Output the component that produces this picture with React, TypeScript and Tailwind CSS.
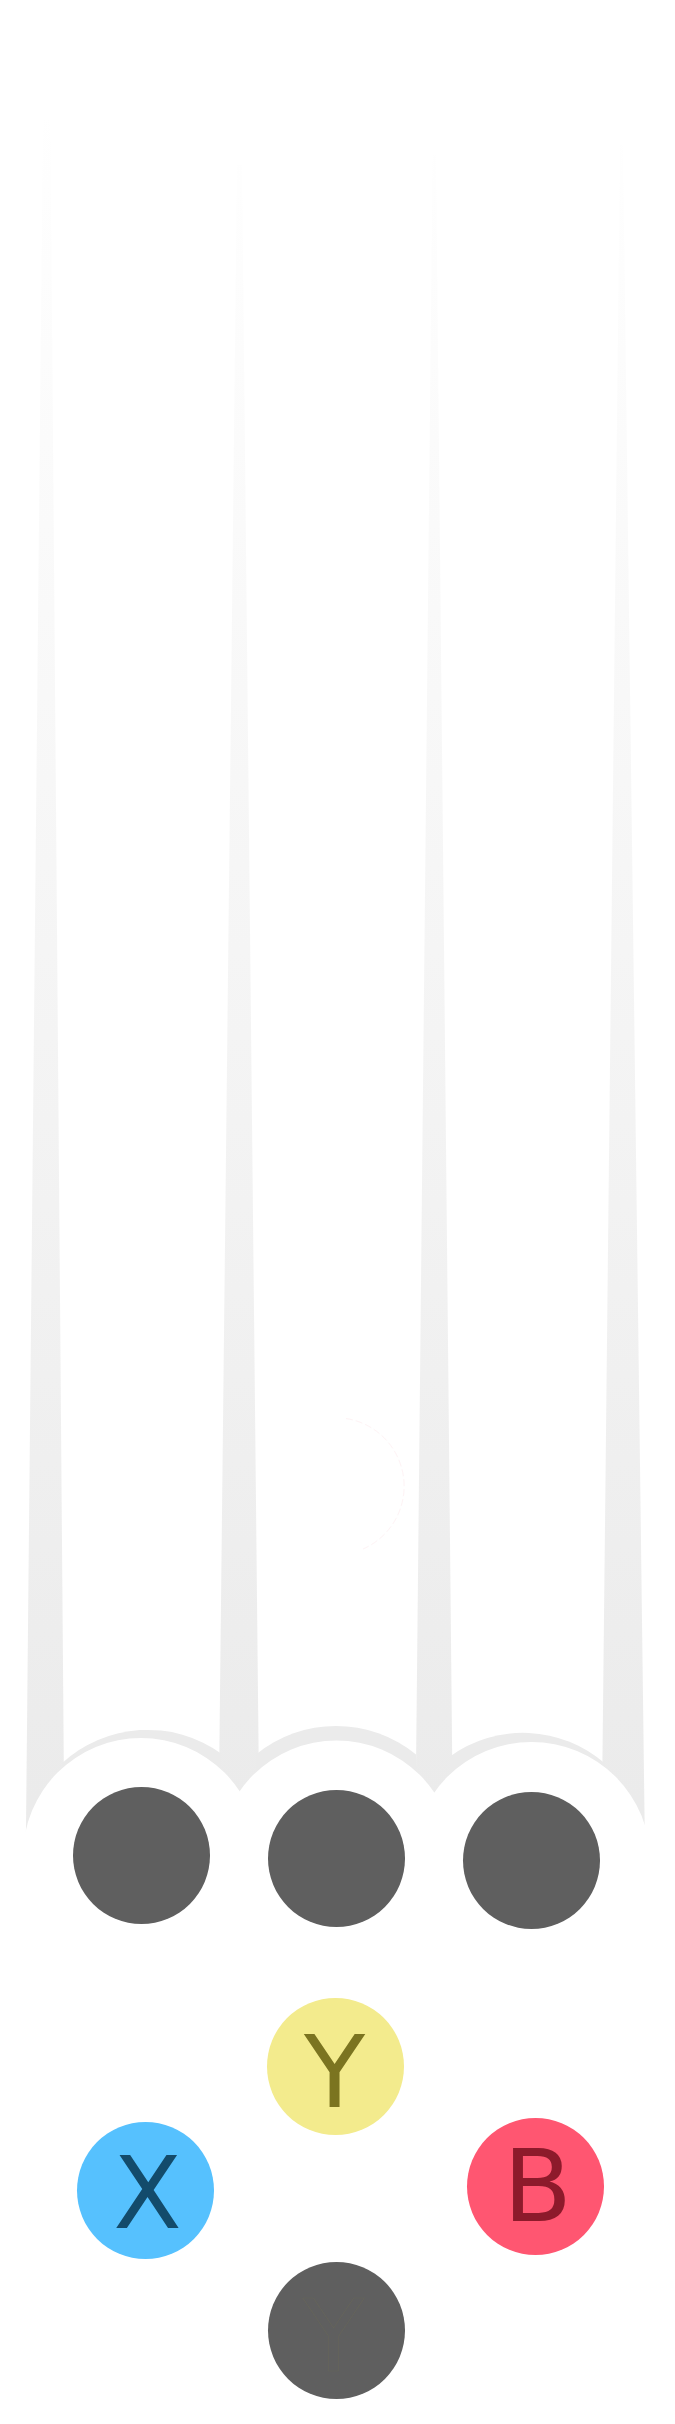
import React from "react";

function Circle({
  className,
  children,
}: {
  className: string;
  children?: React.ReactNode;
}) {
  return (
    <div
      className={
        "flex h-[137px] w-[137px] shrink-0 items-center justify-center rounded-full " +
        className
      }
    >
      {children}
    </div>
  );
}

function Lanes() {
  const lines = [
    "43,120 50.4,120 64.4,1838 25.9,1838",
    "237,165 242,165 259.5,1838 218.4,1838",
    "432.6,155 436,155 453,1838 415.3,1838",
    "620,145 623,145 644.8,1838 601.6,1838",
  ];
  return (
    <svg
      className="absolute inset-0"
      width={675}
      height={2424}
      viewBox="0 0 675 2424"
    >
      <defs>
        <linearGradient
          id="laneFade"
          gradientUnits="userSpaceOnUse"
          x1="0"
          y1="100"
          x2="0"
          y2="1800"
        >
          <stop offset="0" stopColor="#ffffff" />
          <stop offset="1" stopColor="#ebebeb" />
        </linearGradient>
      </defs>
      {lines.map((p) => (
        <polygon key={p} points={p} fill="url(#laneFade)" />
      ))}
      {/* hoods */}
      <path
        d="M 62 1763.3 A 126.3 126.3 0 0 1 221 1753.4 L 221 1880 L 62 1880 Z"
        fill="#ebebeb"
      />
      <path
        d="M 256 1754.5 A 126.6 126.6 0 0 1 416 1754.5 L 416 1880 L 256 1880 Z"
        fill="#ebebeb"
      />
      <path
        d="M 450 1756.4 A 124.5 124.5 0 0 1 605 1763.6 L 605 1880 L 450 1880 Z"
        fill="#ebebeb"
      />
      {/* white target rings */}
      <circle cx="141" cy="1856" r="118" fill="#ffffff" />
      <circle cx="336.5" cy="1858.5" r="118" fill="#ffffff" />
      <circle cx="531.5" cy="1861" r="119" fill="#ffffff" />
      {/* faint ghost note */}
      <path
        d="M 346 1418.5 A 68.5 68.5 0 0 1 363 1549"
        fill="none"
        stroke="#fef3f5"
        strokeWidth="1"
        strokeDasharray="7 3"
      />
    </svg>
  );
}

export default function App() {
  return (
    <div className="relative h-[2424px] w-[675px] overflow-hidden bg-white font-['DejaVu_Sans',sans-serif]">
      <Lanes />
      <div className="relative flex flex-col pt-[1787px]">
        <div className="flex items-start gap-[58px] pl-[73px]">
          <Circle className="bg-[#5f5f5f]" />
          <Circle className="mt-[3px] bg-[#5f5f5f]" />
          <Circle className="mt-[5px] bg-[#5f5f5f]" />
        </div>
        <div className="mt-[69px] flex pl-[267px]">
          <Circle className="bg-[#f3eb8d]">
            <span className="-translate-x-[1px] translate-y-[6px] text-[100px] leading-none text-[#7b7420]">
              Y
            </span>
          </Circle>
        </div>
        <div className="-mt-[17px] flex items-start gap-[253px] pl-[77px]">
          <Circle className="mt-[4px] bg-[#56c1fe]">
            <span className="translate-x-[2px] translate-y-[3px] text-[100px] leading-none text-[#134b6b]">
              X
            </span>
          </Circle>
          <Circle className="bg-[#ff5671]">
            <span className="translate-x-[2px] text-[100px] leading-none text-[#8d1a2b]">
              B
            </span>
          </Circle>
        </div>
        <div className="mt-[3px] flex pl-[268px]">
          <Circle className="bg-[#5f5f5f]">
            <span className="-translate-x-[3px] translate-y-[6px] text-[100px] leading-none text-transparent [-webkit-text-stroke:0.6px_#66655a]">
              Y
            </span>
          </Circle>
        </div>
      </div>
    </div>
  );
}
